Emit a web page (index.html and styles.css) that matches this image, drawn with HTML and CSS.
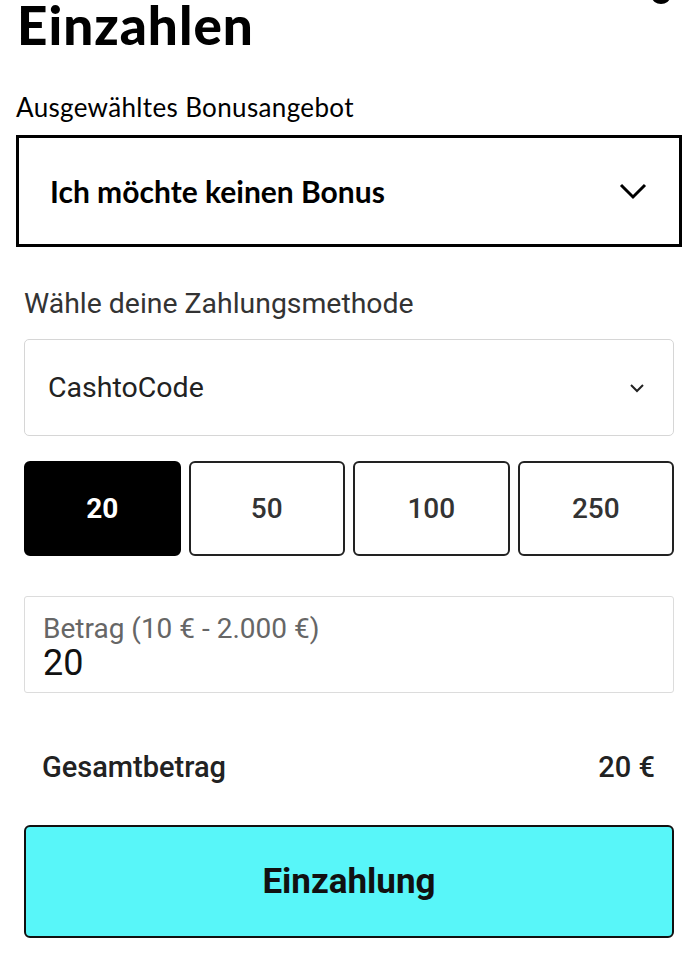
FILE: index.html
```html
<!DOCTYPE html>
<html lang="de">
<head>
<meta charset="utf-8">
<title>Einzahlen</title>
<link rel="stylesheet" href="styles.css">
</head>
<body>
<div class="page">
  <span class="close-frag"></span>
  <h1 class="title">Einzahlen</h1>
  <div class="bonus-label">Ausgewähltes Bonusangebot</div>
  <div class="bonus-select">
    <span>Ich möchte keinen Bonus</span>
    <svg class="chev-lg" width="28" height="18" viewBox="0 0 28 18"><path d="M2 3 L14 15 L26 3" fill="none" stroke="#000" stroke-width="3"/></svg>
  </div>
  <div class="inner">
    <div class="pm-label">Wähle deine Zahlungsmethode</div>
    <div class="pm-select">
      <span>CashtoCode</span>
      <svg class="chev-sm" width="16" height="10" viewBox="0 0 16 10"><path d="M2 2 L8 8 L14 2" fill="none" stroke="#222" stroke-width="2"/></svg>
    </div>
    <div class="amounts">
      <div class="amt active">20</div>
      <div class="amt">50</div>
      <div class="amt">100</div>
      <div class="amt">250</div>
    </div>
    <div class="amount-input">
      <div class="ai-label">Betrag (10 € - 2.000 €)</div>
      <div class="ai-value">20</div>
    </div>
    <div class="total">
      <span>Gesamtbetrag</span>
      <span>20 €</span>
    </div>
    <div class="submit">Einzahlung</div>
  </div>
</div>
</body>
</html>
```
FILE: styles.css
```css
html, body {
  margin: 0;
  padding: 0;
  background: #fff;
}
.page {
  position: relative;
  width: 700px;
  height: 956px;
  overflow: hidden;
  padding: 0 18px 0 16px;
  box-sizing: border-box;
  font-family: "Lato", "Liberation Sans", sans-serif;
  color: #000;
}
.close-frag {
  position: absolute;
  left: 652px;
  top: -10px;
  width: 18px;
  height: 14px;
  border-radius: 50%;
  border-bottom: 4px solid #000;
  box-sizing: border-box;
}
.title {
  margin: 0;
  font-family: "Lato", sans-serif;
  font-weight: 900;
  font-size: 53px;
  line-height: 50px;
  height: 56px;
  padding-left: 1px;
  letter-spacing: 1px;
}
.bonus-label {
  margin-top: 36px;
  font-size: 26px;
  line-height: 30px;
  height: 43px;
  letter-spacing: 0.35px;
}
.bonus-select {
  height: 112px;
  box-sizing: border-box;
  border: 3px solid #000;
  display: flex;
  align-items: center;
  justify-content: space-between;
  padding: 0 32px 0 31px;
  font-weight: 700;
  font-size: 30px;
}
.inner {
  padding: 0 8px;
  font-family: "Roboto", "Inter", sans-serif;
}
.pm-label {
  margin-top: 40px;
  font-size: 28.4px;
  line-height: 34px;
  color: #333;
  height: 52px;
}
.pm-select {
  height: 97px;
  box-sizing: border-box;
  border: 1px solid #d6d6d6;
  border-radius: 5px;
  display: flex;
  align-items: center;
  justify-content: space-between;
  padding: 0 28px 0 23px;
  font-size: 28.5px;
  color: #222;
}
.amounts {
  margin-top: 25px;
  display: grid;
  grid-template-columns: repeat(4, 1fr);
  gap: 8px;
  height: 95px;
}
.amt {
  box-sizing: border-box;
  border: 2px solid #222;
  border-radius: 6px;
  display: flex;
  align-items: center;
  justify-content: center;
  font-size: 28px;
  font-weight: 500;
  color: #333;
}
.amt.active {
  background: #000;
  border-color: #000;
  color: #fff;
  font-weight: 700;
}
.amount-input {
  margin-top: 40px;
  height: 97px;
  box-sizing: border-box;
  border: 1px solid #dcdcdc;
  border-radius: 3px;
  padding: 16px 18px 0;
}
.ai-label {
  font-size: 28px;
  line-height: 32px;
  color: #666;
}
.ai-value {
  font-size: 36px;
  line-height: 37px;
  color: #111;
}
.total {
  height: 132px;
  box-sizing: border-box;
  padding: 16px 19px 0 18px;
  display: flex;
  align-items: center;
  justify-content: space-between;
  font-size: 29px;
  font-weight: 500;
  color: #222;
}
.submit {
  height: 113px;
  box-sizing: border-box;
  background: #58f6f9;
  border: 2px solid #111;
  border-radius: 6px;
  display: flex;
  align-items: center;
  justify-content: center;
  font-size: 35px;
  font-weight: 700;
  color: #111;
}
```
